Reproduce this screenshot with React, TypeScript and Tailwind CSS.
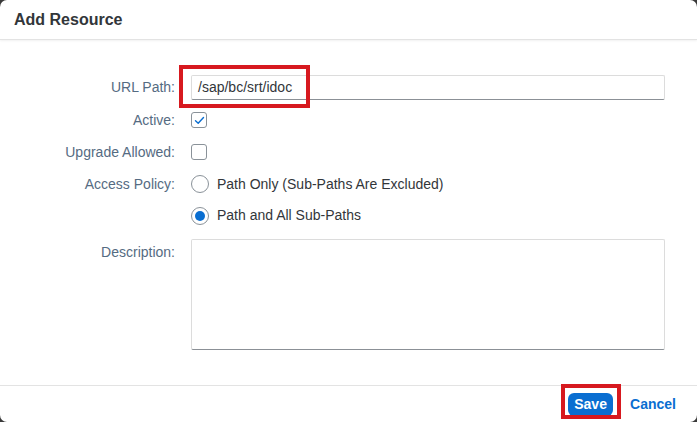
import React from "react";

function Checkbox({ checked }: { checked?: boolean }) {
  return (
    <div className="w-[16px] h-[16px] rounded-[3px] border border-[#8a9299] bg-white flex items-center justify-center">
      {checked && (
        <svg width="11" height="9" viewBox="0 0 11 9" fill="none">
          <path d="M1.5 4.8L4.2 7.3L9.5 1.5" stroke="#0a6ed1" strokeWidth="1.4" strokeLinecap="round" strokeLinejoin="round" />
        </svg>
      )}
    </div>
  );
}

function Radio({ selected }: { selected?: boolean }) {
  return (
    <div className="w-[18px] h-[18px] rounded-full border border-[#8a9299] bg-white flex items-center justify-center">
      {selected && <div className="w-[10px] h-[10px] rounded-full bg-[#0a6ed1]" />}
    </div>
  );
}

function Row({ label, children, className = "" }: { label: string; children: React.ReactNode; className?: string }) {
  return (
    <div className={`flex items-center ${className}`}>
      <div className="w-[176px] pr-[1px] text-right text-[14px] text-[#556b82]">{label}</div>
      <div className="pl-[15px] flex-1 flex items-center">{children}</div>
    </div>
  );
}

export default function App() {
  return (
    <div className="w-[697px] h-[422px] bg-[#3a3a3a] relative overflow-hidden" style={{ fontFamily: '"Liberation Sans", Arial, sans-serif' }}>
      <div className="absolute inset-0 bg-white rounded-[7px] flex flex-col">
        <div className="h-[40px] border-b border-[#e3e3e3] shadow-[0_1px_2px_rgba(0,0,0,0.06)] flex items-center pl-[14px]">
          <span className="text-[16px] font-bold text-[#32363a]">Add Resource</span>
        </div>

        <div className="pt-[35px] pr-[32px]">
          <Row label="URL Path:" className="h-[25px]">
            <div className="flex-1 h-[25px] border border-[#dcdcdc] border-b-[#8b9096] rounded-[2px] flex items-center pl-[6px] text-[14px] text-[#32363a]">
              /sap/bc/srt/idoc
            </div>
          </Row>
          <Row label="Active:" className="h-[32px] mt-[4px]">
            <Checkbox checked />
          </Row>
          <Row label="Upgrade Allowed:" className="h-[32px]">
            <Checkbox />
          </Row>
          <Row label="Access Policy:" className="h-[32px]">
            <Radio />
            <span className="ml-[8px] text-[14px] text-[#32363a]">Path Only (Sub-Paths Are Excluded)</span>
          </Row>
          <div className="flex items-center h-[31px]">
            <div className="w-[176px]" />
            <div className="pl-[15px] flex items-center">
              <Radio selected />
              <span className="ml-[8px] text-[14px] text-[#32363a]">Path and All Sub-Paths</span>
            </div>
          </div>
          <div className="flex items-start mt-[8px]">
            <div className="w-[176px] pr-[1px] text-right text-[14px] text-[#556b82] pt-[3px]">Description:</div>
            <div className="pl-[15px] flex-1">
              <div className="h-[111px] border border-[#dcdcdc] border-b-[#8b9096] rounded-[2px] bg-white" />
            </div>
          </div>
        </div>

        <div className="mt-auto h-[37px] border-t border-[#e3e3e3] flex items-center justify-end pr-[21px] gap-[17px]">
          <div className="w-[45px] h-[23px] rounded-[6px] bg-[#0a6ed1] flex items-center justify-center text-white text-[14px] font-bold">
            Save
          </div>
          <span className="text-[14px] font-bold text-[#0a6ed1]">Cancel</span>
        </div>
      </div>

      <div className="absolute left-[179px] top-[65px] w-[131px] h-[43px] border-[4px] border-[#d7191f]" />
      <div className="absolute left-[561px] top-[384px] w-[60px] h-[35px] border-[4px] border-[#d7191f]" />
    </div>
  );
}
